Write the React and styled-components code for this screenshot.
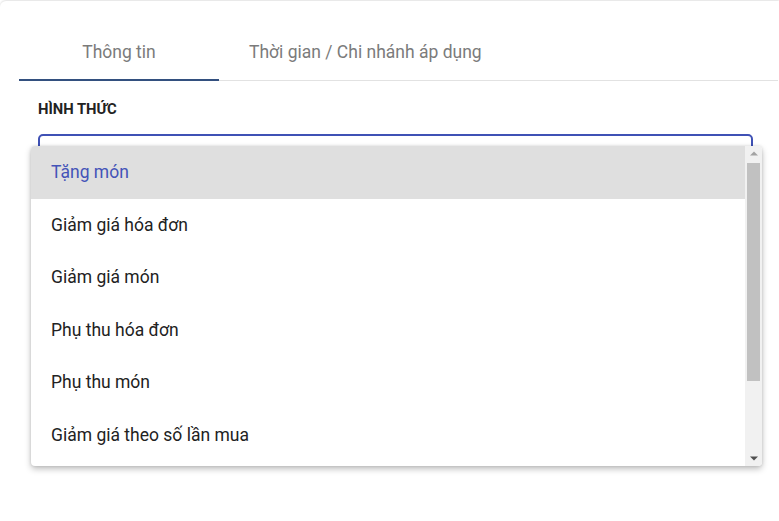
import React from 'react';
import styled, { createGlobalStyle } from 'styled-components';

const GlobalStyle = createGlobalStyle`
  html, body {
    margin: 0;
    padding: 0;
    background: #fff;
    font-family: Roboto, "Noto Sans", sans-serif;
  }
`;

const Card = styled.div`
  margin-top: 1px;
  height: 520px;
  background: #fff;
  border-top-left-radius: 6px;
  box-shadow: 0 -1px 2px rgba(0, 0, 0, 0.12);
  padding: 0 1px 0 19px;
`;

const Tabs = styled.div`
  display: flex;
  padding-top: 23px;
  border-bottom: 1px solid #e2e2e2;
`;

const Tab = styled.div`
  min-width: 200px;
  padding: 0 30px;
  box-sizing: border-box;
  height: 57px;
  display: flex;
  align-items: center;
  justify-content: center;
  font-size: 17.5px;
  color: #7b7b7b;
  border-bottom: 2px solid ${p => (p.active ? '#33507f' : 'transparent')};
  margin-bottom: -1px;
`;

const Body = styled.div`
  padding: 19px 0 0 19px;
`;

const Label = styled.div`
  font-size: 14.8px;
  font-weight: 700;
  color: #222;
`;

const SelectWrap = styled.div`
  position: relative;
  margin-top: 16px;
  width: 715px;
`;

const SelectBox = styled.div`
  height: 40px;
  border: 2px solid #3f51b5;
  border-radius: 5px;
`;

const Menu = styled.div`
  position: absolute;
  top: 12px;
  left: -7px;
  width: 731px;
  height: 320px;
  display: flex;
  background: #fff;
  border-radius: 4px;
  box-shadow: 0 3px 6px rgba(0, 0, 0, 0.25), 0 0 3px rgba(0, 0, 0, 0.12);
  overflow: hidden;
`;

const List = styled.div`
  flex: 1;
  overflow: hidden;
`;

const Option = styled.div`
  height: 52.5px;
  display: flex;
  align-items: center;
  padding-left: 20px;
  font-size: 17.5px;
  color: ${p => (p.selected ? '#4453b8' : '#222')};
  background: ${p => (p.selected ? '#dfdfdf' : 'transparent')};
`;

const Scrollbar = styled.div`
  width: 17px;
  display: flex;
  flex-direction: column;
  background: #f1f1f1;
`;

const ArrowButton = styled.div`
  height: 15px;
  display: flex;
  align-items: center;
  justify-content: center;
`;

const Thumb = styled.div`
  margin: 2px 2px 0;
  height: 218px;
  background: #c1c1c1;
`;

const Spacer = styled.div`
  flex: 1;
`;

const Arrow = ({ up, color }) => (
  <svg width="8" height="5" viewBox="0 0 8 5">
    <path d={up ? 'M0 4.5 L4 0.5 L8 4.5 Z' : 'M0 0.5 L8 0.5 L4 4.5 Z'} fill={color} />
  </svg>
);

const options = [
  'Tặng món',
  'Giảm giá hóa đơn',
  'Giảm giá món',
  'Phụ thu hóa đơn',
  'Phụ thu món',
  'Giảm giá theo số lần mua',
];

const App = () => {
  return (
    <>
      <GlobalStyle />
      <Card>
        <Tabs>
          <Tab active>Thông tin</Tab>
          <Tab>Thời gian / Chi nhánh áp dụng</Tab>
        </Tabs>
        <Body>
          <Label>HÌNH THỨC</Label>
          <SelectWrap>
            <SelectBox />
            <Menu>
              <List>
                {options.map((o, i) => (
                  <Option key={o} selected={i === 0}>
                    {o}
                  </Option>
                ))}
              </List>
              <Scrollbar>
                <ArrowButton>
                  <Arrow up color="#a3a3a3" />
                </ArrowButton>
                <Thumb />
                <Spacer />
                <ArrowButton>
                  <Arrow color="#505050" />
                </ArrowButton>
              </Scrollbar>
            </Menu>
          </SelectWrap>
        </Body>
      </Card>
    </>
  );
};

export default App;
